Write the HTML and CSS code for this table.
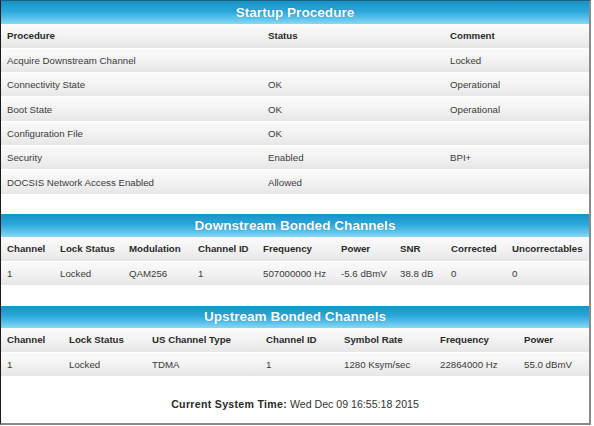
FILE: index.html
```html
<!DOCTYPE html>
<html>
<head>
<meta charset="utf-8">
<link rel="stylesheet" href="styles.css">
</head>
<body>
<div class="frame">
  <section class="sec">
    <div class="bar">Startup Procedure</div>
    <table class="grid startup">
      <colgroup><col class="s1"><col class="s2"><col></colgroup>
      <tr class="head"><th>Procedure</th><th>Status</th><th>Comment</th></tr>
      <tr><td>Acquire Downstream Channel</td><td></td><td>Locked</td></tr>
      <tr><td>Connectivity State</td><td>OK</td><td>Operational</td></tr>
      <tr><td>Boot State</td><td>OK</td><td>Operational</td></tr>
      <tr><td>Configuration File</td><td>OK</td><td></td></tr>
      <tr><td>Security</td><td>Enabled</td><td>BPI+</td></tr>
      <tr><td>DOCSIS Network Access Enabled</td><td>Allowed</td><td></td></tr>
    </table>
  </section>
  <section class="sec gap">
    <div class="bar">Downstream Bonded Channels</div>
    <table class="grid">
      <colgroup><col class="d1"><col class="d2"><col class="d3"><col class="d4"><col class="d5"><col class="d6"><col class="d7"><col class="d8"><col></colgroup>
      <tr class="head"><th>Channel</th><th>Lock Status</th><th>Modulation</th><th>Channel ID</th><th>Frequency</th><th>Power</th><th>SNR</th><th>Corrected</th><th>Uncorrectables</th></tr>
      <tr><td>1</td><td>Locked</td><td>QAM256</td><td>1</td><td>507000000 Hz</td><td>-5.6 dBmV</td><td>38.8 dB</td><td>0</td><td>0</td></tr>
    </table>
  </section>
  <section class="sec gap2">
    <div class="bar short">Upstream Bonded Channels</div>
    <table class="grid">
      <colgroup><col class="u1"><col class="u2"><col class="u3"><col class="u4"><col class="u5"><col class="u6"><col></colgroup>
      <tr class="head"><th>Channel</th><th>Lock Status</th><th>US Channel Type</th><th>Channel ID</th><th>Symbol Rate</th><th>Frequency</th><th>Power</th></tr>
      <tr><td>1</td><td>Locked</td><td>TDMA</td><td>1</td><td>1280 Ksym/sec</td><td>22864000 Hz</td><td>55.0 dBmV</td></tr>
    </table>
  </section>
  <p class="time"><b>Current System Time:</b> Wed Dec 09 16:55:18 2015</p>
</div>
</body>
</html>
```
FILE: styles.css
```css
html, body {
  margin: 0;
  padding: 0;
  background: #fff;
}
.frame {
  box-sizing: border-box;
  width: 591px;
  height: 425px;
  border-left: 1px solid #1a1a1a;
  border-top: 1px solid #1b5e7e;
  border-right: 2px solid #8a8a8a;
  border-bottom: 2px solid #8a8a8a;
  font-family: "Liberation Sans", Arial, sans-serif;
  color: #3a3a3a;
  display: flex;
  flex-direction: column;
}
.sec.gap {
  margin-top: 20px;
}
.sec.gap2 {
  margin-top: 21px;
}
.bar {
  height: 23px;
  line-height: 23px;
  text-align: center;
  font-weight: bold;
  font-size: 13.6px;
  color: #fff;
  text-shadow: 0 0 1px rgba(0, 60, 100, 0.5);
  background: linear-gradient(to bottom, #1893c9 0%, #2aa7da 45%, #62c6ec 80%, #8ad8f3 100%);
}
.bar.short {
  height: 22px;
  line-height: 22px;
}
.grid {
  width: 100%;
  border-collapse: collapse;
  table-layout: fixed;
  font-size: 9.7px;
}
.grid th, .grid td {
  box-sizing: border-box;
  text-align: left;
  padding: 0 0 0 6px;
  height: 24px;
  white-space: nowrap;
  overflow: hidden;
}
.startup th, .startup td {
  height: 24.3px;
}
.grid tr {
  background: linear-gradient(to bottom, #fbfbfb 0%, #f3f3f3 50%, #e6e6e6 100%);
}
.grid tr + tr td {
  border-top: 1px solid #ffffff;
}
.grid th {
  font-weight: bold;
  color: #2a2a2a;
}
.s1 { width: 261px; }
.s2 { width: 182px; }
.d1 { width: 53px; }
.d2 { width: 69px; }
.d3 { width: 69px; }
.d4 { width: 65px; }
.d5 { width: 78px; }
.d6 { width: 59px; }
.d7 { width: 51px; }
.d8 { width: 61px; }
.u1 { width: 62px; }
.u2 { width: 83px; }
.u3 { width: 114px; }
.u4 { width: 78px; }
.u5 { width: 96px; }
.u6 { width: 84px; }
.time {
  margin: 22px 0 0 0;
  text-align: center;
  font-size: 10.6px;
  color: #333;
}
.time b {
  color: #2a2a2a;
  letter-spacing: 0.3px;
}
```
